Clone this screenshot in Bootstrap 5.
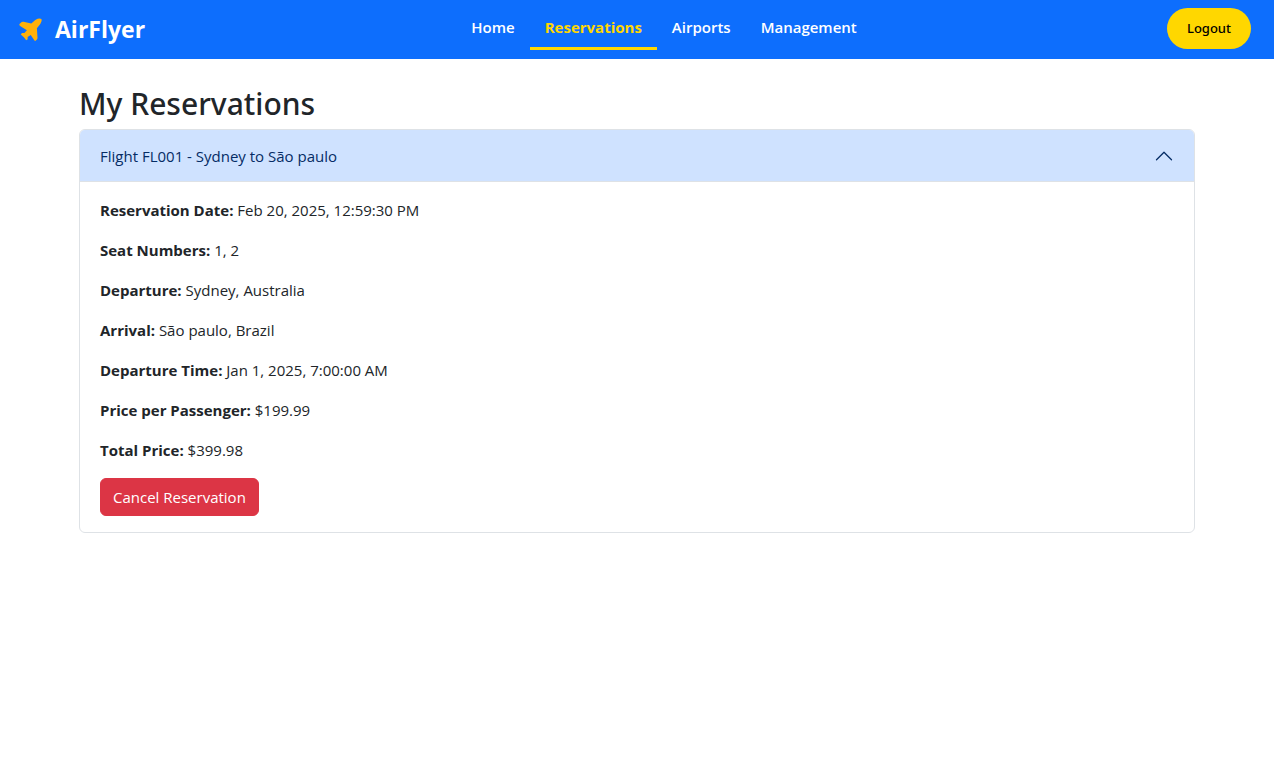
<!DOCTYPE html>
<html lang="en">
<head>
<meta charset="utf-8">
<meta name="viewport" content="width=device-width, initial-scale=1">
<title>AirFlyer - My Reservations</title>
<link href="https://cdn.jsdelivr.net/npm/bootstrap@5.3.0/dist/css/bootstrap.min.css" rel="stylesheet">
<style>
  body { font-family: "Open Sans", "Noto Sans", sans-serif; font-size: 15px; line-height: 24px; }
  .topbar { padding: 8px 23px 9px 18px; }
  .brand-link { font-size: 23px; font-weight: 700; line-height: 34px; gap: 11px; }
  .brand-link svg { width: 26px; height: 26px; }
  .main-links .nav-link { color: #fff; font-size: 15px; font-weight: 600; line-height: 24px; padding: 7px 15px 8px; border-bottom: 3px solid transparent; }
  .main-links .nav-link.active { color: #ffd700; font-weight: 700; border-bottom-color: #ffd700; }
  .logout { background: #ffd700; color: #000; border-radius: 25px; padding: 10px 20px; font-family: "Noto Sans", sans-serif; font-size: 13px; font-weight: 500; line-height: 21px; }
  .page-title { font-family: "Noto Sans", sans-serif; font-size: 30px; line-height: 42px; font-weight: 500; }
  .accordion { --bs-accordion-active-color: #052c65; --bs-accordion-active-bg: #cfe2ff; --bs-accordion-border-color: #dee2e6; }
  .accordion-button { font-size: 15px; line-height: 20px; }
  .accordion-button:not(.collapsed)::after {
    background-image: url("data:image/svg+xml,%3csvg xmlns='http://www.w3.org/2000/svg' viewBox='0 0 16 16' fill='none' stroke='%23052c65' stroke-linecap='round' stroke-linejoin='round'%3e%3cpath d='m2 5 6 6 6-6'/%3e%3c/svg%3e");
  }
  .btn-danger { font-size: 15px; line-height: 24px; }
</style>
</head>
<body>
<nav class="topbar bg-primary d-flex flex-wrap justify-content-between align-items-start">
  <a href="#" class="brand-link d-flex align-items-center text-white text-decoration-none me-3 mt-1">
    <svg viewBox="0 0 26 26" aria-hidden="true"><path fill="#ffb10a" d="M1.500 8 3.700 6.100Q4.400 5.500 5.500 5.700L13.300 7.600 17.300 4Q21 1.900 23.500 3 24.400 5.200 22.300 8L18.900 12.200 19.500 21.700Q19.500 22.700 18.900 23.500L17.900 24.600Q16.900 25.600 16.300 24.300L12.700 18.900 9.600 21 9.700 23.300 8.200 24.300 5.900 21.300 2.800 18.600 4 16.900 6.400 17.100 8.900 14.300 2.100 10Q.9 9.100 1.500 8Z"/></svg>
    <span>AirFlyer</span>
  </a>
  <ul class="nav main-links">
    <li class="nav-item"><a class="nav-link" href="#">Home</a></li>
    <li class="nav-item"><a class="nav-link active" aria-current="page" href="#">Reservations</a></li>
    <li class="nav-item"><a class="nav-link" href="#">Airports</a></li>
    <li class="nav-item"><a class="nav-link" href="#">Management</a></li>
  </ul>
  <button class="logout border-0" type="button">Logout</button>
</nav>

<main class="container pt-4">
  <h2 class="page-title mb-1">My Reservations</h2>
  <div class="accordion" id="reservations">
    <div class="accordion-item">
      <h2 class="accordion-header">
        <button class="accordion-button" type="button" data-bs-toggle="collapse" data-bs-target="#flight1" aria-expanded="true" aria-controls="flight1">Flight FL001 - Sydney to São paulo</button>
      </h2>
      <div id="flight1" class="accordion-collapse collapse show" data-bs-parent="#reservations">
        <div class="accordion-body">
          <p><strong>Reservation Date:</strong> Feb 20, 2025, 12:59:30 PM</p>
          <p><strong>Seat Numbers:</strong> 1, 2</p>
          <p><strong>Departure:</strong> Sydney, Australia</p>
          <p><strong>Arrival:</strong> São paulo, Brazil</p>
          <p><strong>Departure Time:</strong> Jan 1, 2025, 7:00:00 AM</p>
          <p><strong>Price per Passenger:</strong> $199.99</p>
          <p><strong>Total Price:</strong> $399.98</p>
          <button class="btn btn-danger" type="button">Cancel Reservation</button>
        </div>
      </div>
    </div>
  </div>
</main>
<script src="https://cdn.jsdelivr.net/npm/bootstrap@5.3.0/dist/js/bootstrap.bundle.min.js"></script>
</body>
</html>
